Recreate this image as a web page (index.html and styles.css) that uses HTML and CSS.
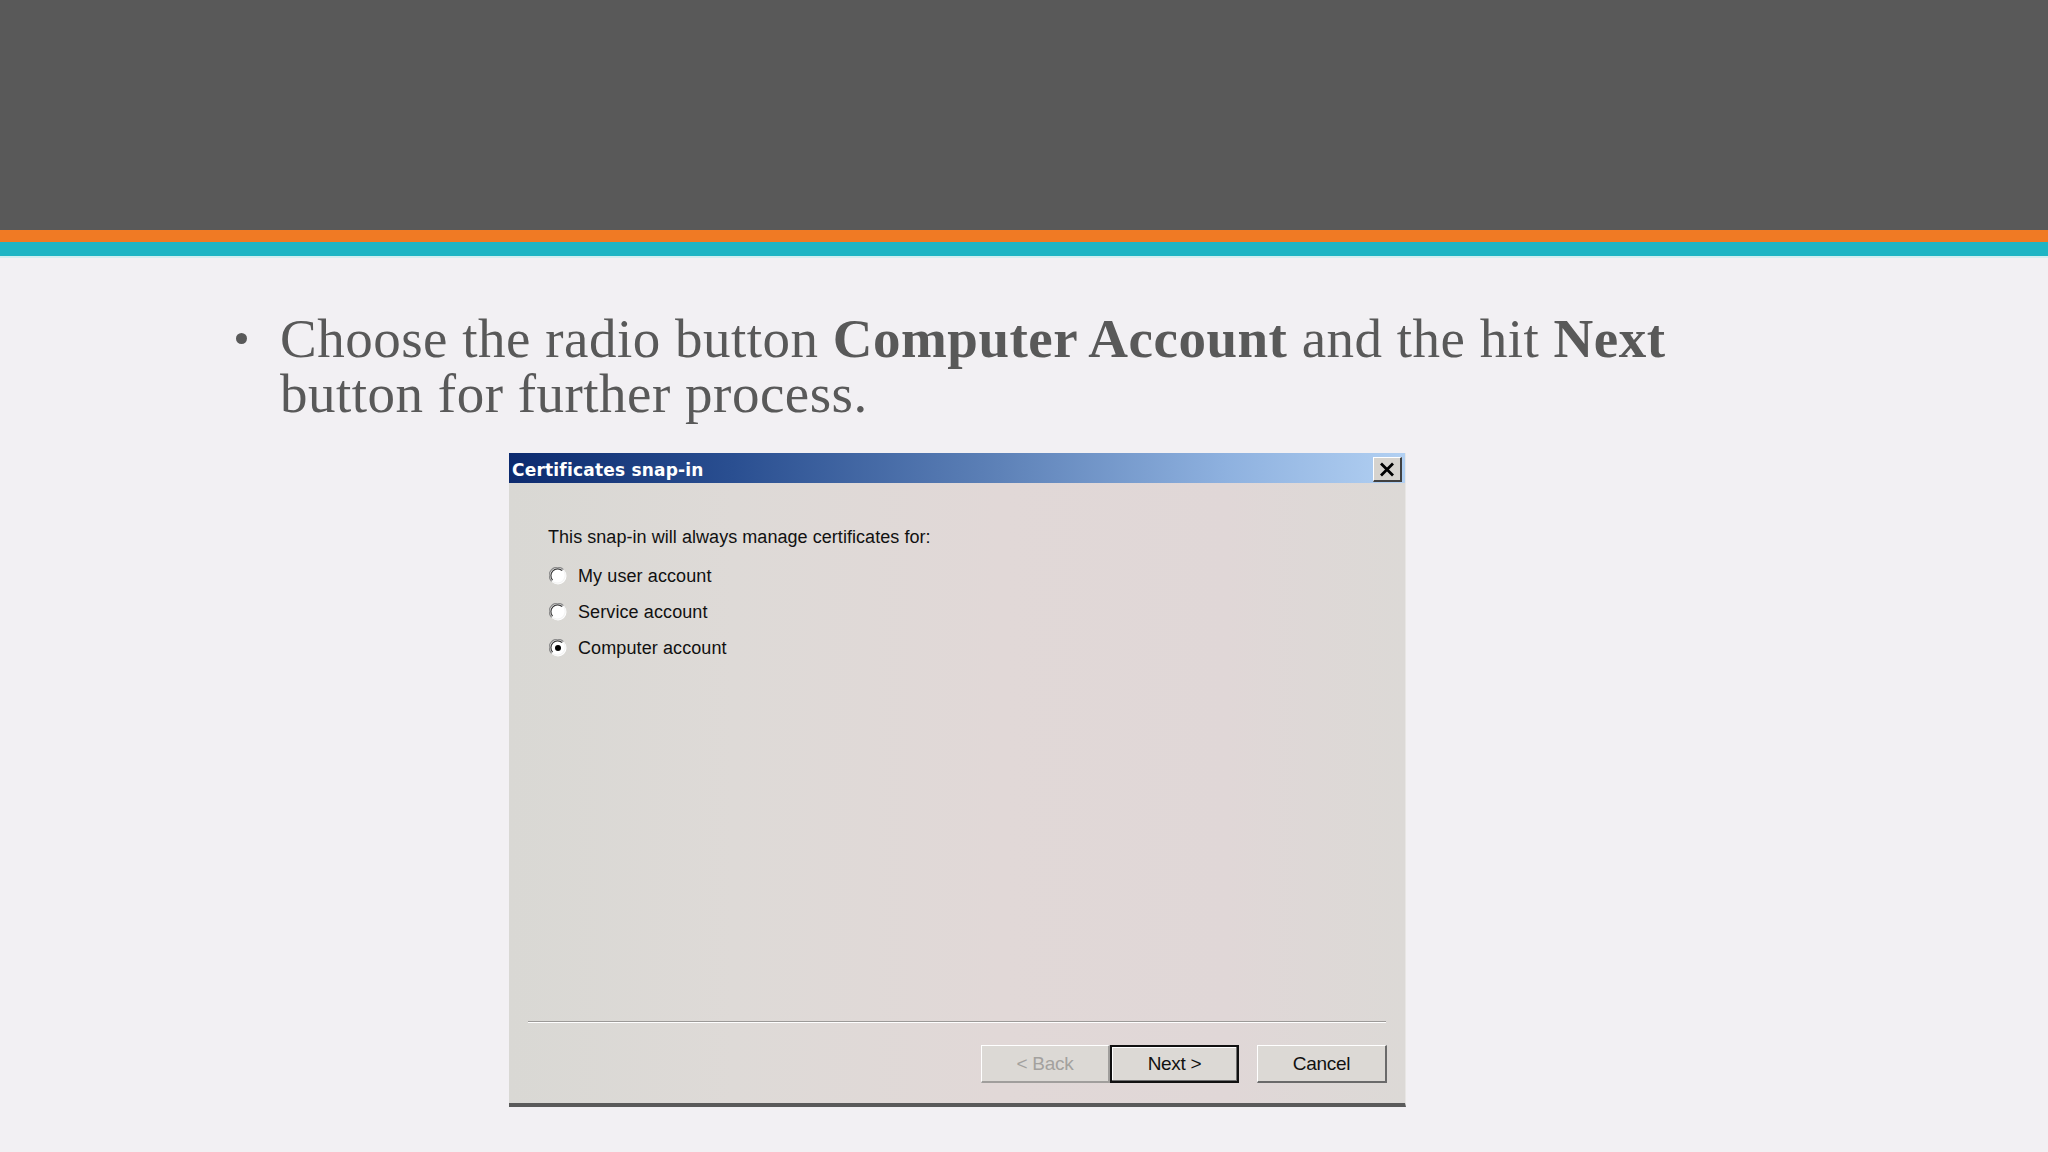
FILE: index.html
```html
<!DOCTYPE html>
<html lang="en">
<head>
<meta charset="utf-8">
<title>Certificates snap-in</title>
<link rel="stylesheet" href="styles.css">
</head>
<body>
<div class="header"></div>
<div class="stripe-orange"></div>
<div class="stripe-teal"></div>
<div class="stripe-light"></div>

<div class="content">
  <div class="bullet-item">
    <span class="bullet-dot"></span>
    <p class="bullet-text">Choose the radio button <b>Computer Account</b> and the hit <b>Next</b><br>button for further process.</p>
  </div>

  <div class="dialog">
    <div class="titlebar">
      <span class="title">Certificates snap-in</span>
      <span class="close-btn">
        <svg width="16" height="15" viewBox="0 0 16 15"><path d="M2 1.5 L14 13.5 M14 1.5 L2 13.5" stroke="#000" stroke-width="2.8" fill="none"/></svg>
      </span>
    </div>
    <div class="dialog-body">
      <div class="prompt">This snap-in will always manage certificates for:</div>
      <div class="radio-row">
        <span class="radio"><svg width="18" height="18" viewBox="0 0 18 18"><circle cx="9" cy="9" r="8.5" fill="#ffffff"/><path d="M2.6 14.4 A8 8 0 0 1 14.4 2.6" stroke="#8a8a8a" stroke-width="1.2" fill="none"/><path d="M3.6 13.2 A6.8 6.8 0 0 1 13.2 3.6" stroke="#3a3a3a" stroke-width="1.2" fill="none"/><path d="M14.6 3.4 A8 8 0 0 1 3.4 14.6" stroke="#f4f4f4" stroke-width="1.2" fill="none"/></svg></span>
        <span class="radio-label">My user account</span>
      </div>
      <div class="radio-row">
        <span class="radio"><svg width="18" height="18" viewBox="0 0 18 18"><circle cx="9" cy="9" r="8.5" fill="#ffffff"/><path d="M2.6 14.4 A8 8 0 0 1 14.4 2.6" stroke="#8a8a8a" stroke-width="1.2" fill="none"/><path d="M3.6 13.2 A6.8 6.8 0 0 1 13.2 3.6" stroke="#3a3a3a" stroke-width="1.2" fill="none"/><path d="M14.6 3.4 A8 8 0 0 1 3.4 14.6" stroke="#f4f4f4" stroke-width="1.2" fill="none"/></svg></span>
        <span class="radio-label">Service account</span>
      </div>
      <div class="radio-row">
        <span class="radio"><svg width="18" height="18" viewBox="0 0 18 18"><circle cx="9" cy="9" r="8.5" fill="#ffffff"/><path d="M2.6 14.4 A8 8 0 0 1 14.4 2.6" stroke="#8a8a8a" stroke-width="1.2" fill="none"/><path d="M3.6 13.2 A6.8 6.8 0 0 1 13.2 3.6" stroke="#3a3a3a" stroke-width="1.2" fill="none"/><path d="M14.6 3.4 A8 8 0 0 1 3.4 14.6" stroke="#f4f4f4" stroke-width="1.2" fill="none"/><circle cx="9" cy="9" r="3" fill="#000"/></svg></span>
        <span class="radio-label">Computer account</span>
      </div>
    </div>
    <div class="separator"></div>
    <div class="button-row">
      <span class="btn btn-disabled">&lt; Back</span>
      <span class="btn btn-default">Next &gt;</span>
      <span class="btn btn-cancel">Cancel</span>
    </div>
  </div>
</div>
</body>
</html>
```

FILE: styles.css
```css
* { box-sizing: border-box; }

html, body {
  margin: 0;
  padding: 0;
}

body {
  width: 2048px;
  height: 1152px;
  overflow: hidden;
  background: #f2f0f3;
  font-family: "Liberation Sans", Arial, sans-serif;
}

.header {
  height: 230px;
  background: #595959;
}

.stripe-orange {
  height: 12px;
  background: #f07a24;
}

.stripe-teal {
  height: 14px;
  background: #1eb5c4;
}

.stripe-light {
  height: 2px;
  background: #d2eef0;
}

.content {
  padding-top: 53px;
}

.bullet-item {
  display: flex;
  align-items: flex-start;
  padding-left: 236px;
}

.bullet-dot {
  flex: 0 0 auto;
  width: 11px;
  height: 11px;
  border-radius: 50%;
  background: #595959;
  margin-top: 22px;
  margin-right: 33px;
}

.bullet-text {
  margin: 0;
  font-family: "Liberation Serif", "Times New Roman", serif;
  font-size: 55px;
  line-height: 55px;
  letter-spacing: 0.5px;
  color: #595959;
}

.bullet-text b {
  font-weight: bold;
}

.dialog {
  margin-top: 32px;
  margin-left: 509px;
  width: 897px;
  height: 654px;
  display: flex;
  flex-direction: column;
  background: linear-gradient(90deg, #d9d8d4 0%, #dedad7 25%, #e1d8d7 55%, #e0d7d7 80%, #dcd9d6 100%);
  border-bottom: 4px solid #5a5a5a;
  border-right: 1px solid #e8e6e4;
}

.titlebar {
  height: 30px;
  flex: 0 0 30px;
  display: flex;
  align-items: flex-start;
  justify-content: space-between;
  background: linear-gradient(90deg, #0c2a6e 0%, #2a4f91 25%, #5e82b8 55%, #8eb1df 80%, #b2d0f2 100%);
  padding-left: 3px;
  padding-right: 3px;
}

.title {
  padding-top: 4px;
  line-height: 26px;
  font-family: "DejaVu Sans", Verdana, sans-serif;
  font-weight: bold;
  font-size: 17px;
  color: #ffffff;
  letter-spacing: 0.2px;
}

.close-btn {
  margin-top: 4px;
  width: 29px;
  height: 25px;
  display: flex;
  align-items: center;
  justify-content: center;
  background: #d6d3ce;
  border-top: 1px solid #ffffff;
  border-left: 1px solid #ffffff;
  border-right: 2px solid #404040;
  border-bottom: 2px solid #404040;
}

.dialog-body {
  flex: 1 1 auto;
  padding-top: 43px;
  padding-left: 39px;
  color: #111;
  font-size: 18px;
}

.prompt {
  line-height: 22px;
  margin-bottom: 10px;
  letter-spacing: 0.05px;
}

.radio-row {
  height: 36px;
  display: flex;
  align-items: center;
  padding-left: 1px;
}

.radio {
  width: 18px;
  height: 18px;
  display: flex;
  margin-right: 11px;
}

.radio-label {
  line-height: 22px;
  letter-spacing: 0.1px;
}

.separator {
  flex: 0 0 2px;
  margin: 0 19px;
  border-top: 1px solid #9c9a98;
  border-bottom: 1px solid #ffffff;
}

.button-row {
  flex: 0 0 auto;
  display: flex;
  justify-content: flex-end;
  padding-top: 22px;
  padding-bottom: 20px;
  padding-right: 18px;
}

.btn {
  height: 38px;
  width: 129px;
  display: flex;
  align-items: center;
  justify-content: center;
  font-size: 19px;
  letter-spacing: -0.3px;
  color: #111;
  background: #dcd9d5;
  border-top: 1px solid #ffffff;
  border-left: 1px solid #ffffff;
  border-right: 2px solid #6a6a6a;
  border-bottom: 2px solid #6a6a6a;
}

.btn-disabled {
  color: #a3a19e;
  border-right-color: #a09e9c;
  border-bottom-color: #a09e9c;
}

.btn-default {
  border: 2px solid #111;
  box-shadow: inset -1px -1px 0 #707070, inset 1px 1px 0 #ffffff;
}

.btn-cancel {
  width: 130px;
  margin-left: 18px;
}
```
